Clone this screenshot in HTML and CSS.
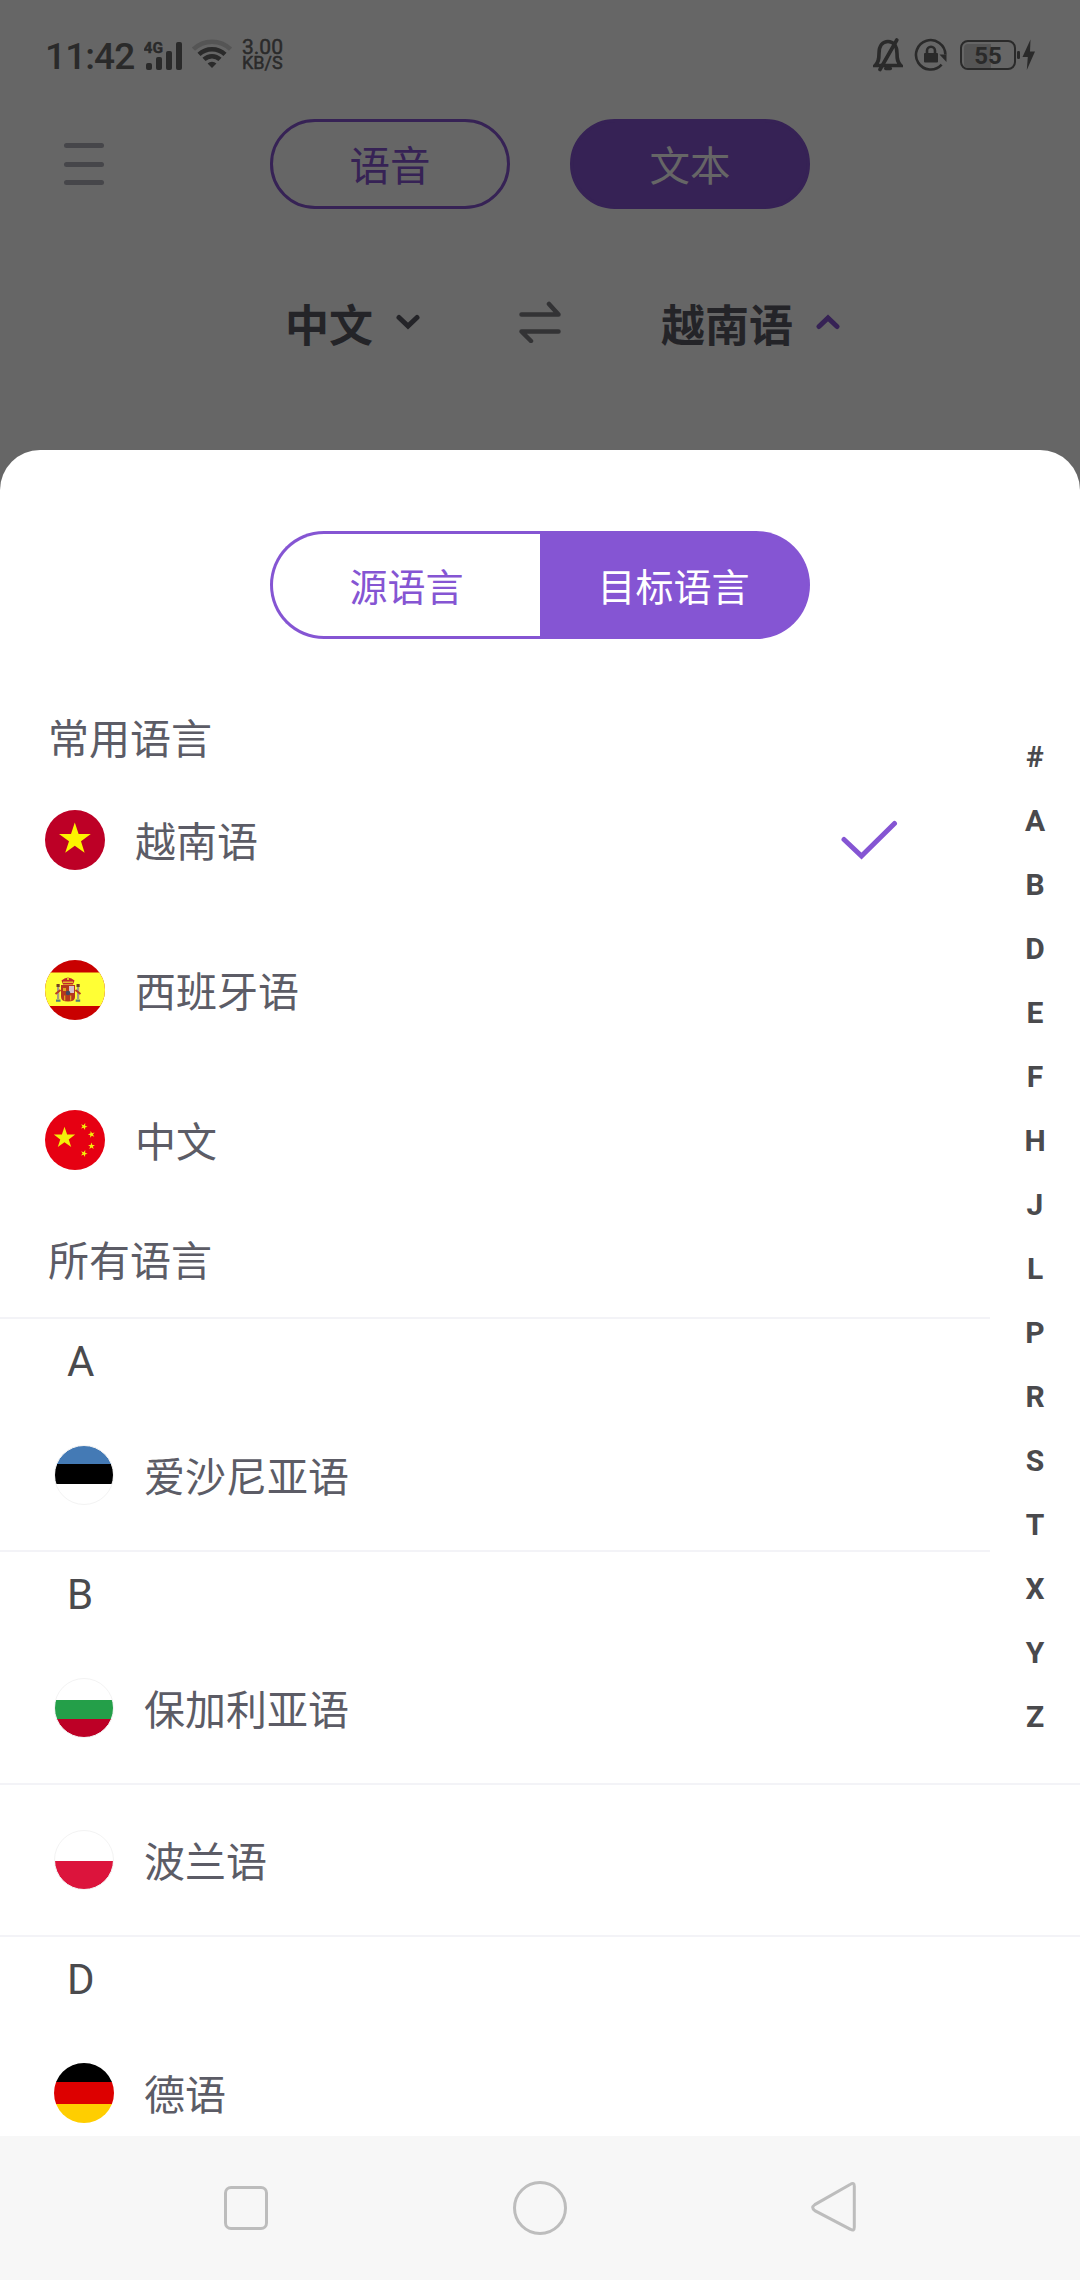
FILE: index.html
```html
<!DOCTYPE html>
<html lang="zh-CN">
<head>
<meta charset="utf-8">
<title>选择语言</title>
<link rel="stylesheet" href="styles.css">
</head>
<body>
<div class="screen">
  <div class="status-bar">
    <span class="clock">11:42</span>
    <svg class="signal" width="40" height="32" viewBox="0 0 40 32">
      <text x="-.5" y="14" class="net-type">4G</text>
      <rect x="2" y="24" width="6" height="7" rx="2"/>
      <rect x="12" y="18" width="6" height="13" rx="2"/>
      <rect x="22" y="12" width="6" height="19" rx="2"/>
      <rect x="32" y="3" width="6" height="28" rx="2"/>
    </svg>
    <svg class="wifi" width="40" height="32" viewBox="0 0 40 32">
      <path class="faint" d="M1.5 11.2a26.5 26.5 0 0 1 37 0" />
      <path d="M7 16.3a19 19 0 0 1 26 0"/>
      <path d="M12 21.4a11.6 11.6 0 0 1 16 0"/>
      <path class="dot" d="M15.6 25.4a6.4 6.4 0 0 1 8.8 0L20 30Z"/>
    </svg>
    <div class="speed"><span class="rate">3.00</span><span class="unit">KB/S</span></div>
    <svg class="bell" width="30" height="34" viewBox="0 0 30 34">
      <path d="M2.2 27.5h25.6c-3.300-3-3.800-6-3.800-12C24 7.500 20 3.500 15 3.500S6 7.500 6 15.500c0 6-.5 9-3.800 12Z"/>
      <path d="M12.800 30.500h4.500M23.800 2 7 31.500"/>
    </svg>
    <svg class="lock" width="34" height="34" viewBox="0 0 34 34">
      <path class="ring" d="M31.400 16.500a14.700 14.700 0 1 0-3.800 10.200"/>
      <path d="M25.500 16.500h7v7.500Z"/>
      <rect x="10" y="15" width="14" height="9.500" rx="1"/>
      <path class="ring" d="M13 16v-3.200a4 4 0 0 1 8 0V16"/>
    </svg>
    <div class="battery"><span class="charge"></span><span class="level">55</span></div>
    <svg class="bolt" width="20" height="32" viewBox="0 0 20 32">
      <rect x="1" y="12" width="3" height="8" rx="1.300"/>
      <path d="M14.500.5 6.500 18h5.300l-1 13L19 12.500h-5Z"/>
    </svg>
  </div>

  <div class="top-bar">
    <div class="menu"><i></i><i></i><i></i></div>
    <div class="mode">语音</div>
    <div class="mode mode-on">文本</div>
  </div>

  <div class="pair">
    <span class="lang">中文</span>
    <svg class="caret" width="24" height="16" viewBox="0 0 24 16"><path d="m3 3.500 9 8.500 9-8.500"/></svg>
    <svg class="swap" width="42" height="42" viewBox="0 0 42 42"><path d="M2.500 13.500h37L30 3M39.500 30.500h-37L12 40"/></svg>
    <span class="lang target">越南语</span>
    <svg class="caret up" width="24" height="16" viewBox="0 0 24 16"><path d="m3 12.500 9-8.500 9 8.500"/></svg>
  </div>

  <div class="sheet">
    <div class="tabs"><div class="tab">源语言</div><div class="tab tab-on">目标语言</div></div>
    <div class="list">
      <div class="title">常用语言</div>
      <div class="row common">
        <svg class="flag" viewBox="0 0 60 60"><circle cx="30" cy="30" r="30" fill="#bd0026"/><path fill="#fcf400" d="M29.800 12.500l3.800 11.500h12.200L36 31.200l3.600 11.500L29.800 35.800l-9.600 6.900L24 31.200l-10-7.200h12z"/></svg>
        <span class="name">越南语</span>
        <svg class="check" width="58" height="40" viewBox="0 0 58 40"><path d="m4 19.500 17.500 16.500L54.500 3.500"/></svg>
      </div>
      <div class="row common">
        <svg class="flag" viewBox="0 0 60 60">
          <clipPath id="round"><circle cx="30" cy="30" r="30"/></clipPath>
          <g clip-path="url(#round)">
            <path fill="#c90000" d="M0 0h60v60H0z"/><path fill="#ffff35" d="M0 12.500h60v33.500H0z"/>
            <path fill="#c2262b" d="M16.500 20.500l3-2 3.500-1 3.500 1 3 2-1.500 4h-10z"/>
            <path fill="#e8b82b" d="M18 21.500h10v1.500H18zM22 17h2v3h-2z"/>
            <path fill="#b5371d" d="M16 25h14v12q0 4.500-7 4.500T16 37z"/>
            <path fill="#d9c0c8" d="M24 26h5v7h-5z"/>
            <path fill="#e0a51c" d="M18 28h3v3h-3zM19 35.500h1.300v5H19zM25 35.500h1.300v5H25z"/>
            <circle cx="23" cy="33" r="2.300" fill="#43455f"/>
            <path fill="#a89a86" d="M12 26h2.200v13H12zM32 26h2.200v13H32z"/>
            <path fill="#713f20" d="M11.500 24h3.200v3h-3.200zM31.500 24h3.200v3h-3.200z"/>
            <path fill="none" stroke="#ba3b22" stroke-width="2" d="M10.500 34l5-4M35.500 34l-5-4"/>
            <path fill="#557b7c" d="M11 39.500h4.500v2.300H11zM30.700 39.500h4.500v2.300h-4.500z"/>
          </g>
        </svg>
        <span class="name">西班牙语</span>
      </div>
      <div class="row common">
        <svg class="flag" viewBox="0 0 60 60">
          <defs><path id="star" d="M0-10 2.350-3.100h7.200L3.800 1.250 6 8.100 0 3.900-6 8.100-3.800 1.250-9.550-3.100h7.200z"/></defs>
          <circle cx="30" cy="30" r="30" fill="#e60012"/>
          <g fill="#f3ef09">
            <use href="#star" transform="translate(19.500 28) scale(1.120)"/>
            <use href="#star" transform="translate(39 16.500) rotate(20) scale(.36)"/>
            <use href="#star" transform="translate(46.500 24.500) rotate(-14) scale(.36)"/>
            <use href="#star" transform="translate(46.500 36) scale(.36)"/>
            <use href="#star" transform="translate(39 43.500) rotate(20) scale(.36)"/>
          </g>
        </svg>
        <span class="name">中文</span>
      </div>
      <div class="title all">所有语言</div>

      <div class="letter">A</div>
      <div class="row"><span class="flag stripes estonia"></span><span class="name">爱沙尼亚语</span></div>
      <div class="letter">B</div>
      <div class="row"><span class="flag stripes bulgaria"></span><span class="name">保加利亚语</span></div>
      <div class="row ruled"><span class="flag stripes poland"></span><span class="name">波兰语</span></div>
      <div class="letter">D</div>
      <div class="row"><span class="flag stripes germany"></span><span class="name">德语</span></div>
    </div>
    <div class="index">
      <span>#</span><span>A</span><span>B</span><span>D</span><span>E</span><span>F</span><span>H</span><span>J</span><span>L</span><span>P</span><span>R</span><span>S</span><span>T</span><span>X</span><span>Y</span><span>Z</span>
    </div>
  </div>

  <div class="nav-bar">
    <svg width="60" height="60" viewBox="0 0 60 60"><rect x="9.500" y="9.500" width="41" height="41" rx="5.500"/></svg>
    <svg width="60" height="60" viewBox="0 0 60 60"><circle cx="30" cy="30" r="25.500"/></svg>
    <svg width="60" height="60" viewBox="0 0 60 60"><path d="M46.500 6.200Q50.300 3.800 50.300 8.500V49Q50.300 53.600 46.500 51.300L10.800 32.600Q6.600 29.600 10.800 26.600Z"/></svg>
  </div>
</div>
</body>
</html>
```
FILE: styles.css
```css
* { box-sizing: border-box; }

body {
  margin: 0;
  font-family: "Noto Sans CJK SC", Roboto, sans-serif;
}

svg { display: block; flex: none; }

.screen {
  width: 1080px;
  height: 2280px;
  display: flex;
  flex-direction: column;
  background: #666;
  overflow: hidden;
}

/* status bar */
.status-bar {
  height: 112px;
  flex: none;
  display: flex;
  align-items: center;
  padding: 0 44px 0 45px;
  font-family: Roboto, sans-serif;
  color: #2a2a2a;
  fill: #2a2a2a;
}

.clock {
  width: 99px;
  padding-top: 1px;
  font-size: 37px;
  line-height: 44px;
  font-weight: 500;
  letter-spacing: -.9px;
}

.net-type {
  font-size: 15.500px;
  font-weight: 700;
  stroke: #2a2a2a;
  stroke-width: .4px;
}

.signal { margin-top: -2px; }

.wifi {
  margin: -4px 0 0 8px;
  fill: none;
  stroke: #2a2a2a;
  stroke-width: 4.500;
}

.wifi .faint { stroke: #555; }
.wifi .dot { fill: #2a2a2a; stroke: none; }

.speed {
  display: flex;
  flex-direction: column;
  margin: -3px auto 0 10px;
  font-weight: 400;
  -webkit-text-stroke: .5px #2a2a2a;
}

.rate { font-size: 21px; line-height: 16px; }
.unit { font-size: 18px; line-height: 16px; }

.bell {
  margin-top: -3px;
  fill: none;
  stroke: #2a2a2a;
  stroke-width: 3.600;
  stroke-linecap: round;
}

.lock { margin: -2px 0 0 11px; }

.ring {
  fill: none;
  stroke: #2a2a2a;
  stroke-width: 2.600;
}

.battery {
  width: 56px;
  height: 30px;
  margin: -2px 0 0 12px;
  padding: 2px;
  display: grid;
  border: 2px solid #2a2a2a;
  border-radius: 8px;
}

.charge, .level { grid-area: 1 / 1; }

.charge {
  width: 27px;
  background: #555;
  border-radius: 4px 0 0 4px;
}

.level {
  font-size: 24px;
  line-height: 24px;
  font-weight: 700;
  text-align: center;
}

.bolt { margin-top: -2px; }

/* translation header */
.top-bar {
  height: 90px;
  flex: none;
  margin-top: 7px;
  display: flex;
  align-items: center;
}

.menu {
  width: 40px;
  height: 42px;
  margin: 0 166px 0 64px;
  display: flex;
  flex-direction: column;
  justify-content: space-between;
}

.menu i {
  height: 5px;
  border-radius: 3px;
  background: #46464a;
}

.mode {
  width: 240px;
  height: 90px;
  margin-right: 60px;
  border: 3px solid #362255;
  border-radius: 45px;
  font-size: 40.500px;
  line-height: 83px;
  text-align: center;
  color: #362255;
}

.mode-on {
  background: #362255;
  color: #666;
}

.pair {
  height: 241px;
  flex: none;
  display: flex;
  align-items: center;
  padding: 0 0 17px 285px;
}

.lang {
  padding-top: 3px;
  font-size: 44px;
  line-height: 60px;
  font-weight: 700;
  color: #242428;
}

.caret {
  margin: 2px 0 0 23px;
  fill: none;
  stroke: #242428;
  stroke-width: 5;
  stroke-linecap: round;
}

.caret.up { stroke: #362255; }

.swap {
  margin: 1px 0 0 99px;
  fill: none;
  stroke: #333335;
  stroke-width: 4.500;
  stroke-linecap: round;
  stroke-linejoin: round;
}

.target { margin-left: 100px; }

/* language sheet */
.sheet {
  position: relative;
  flex: 1;
  min-height: 0;
  display: flex;
  flex-direction: column;
  background: #fff;
  border-radius: 40px 40px 0 0;
  overflow: hidden;
}

.tabs {
  width: 540px;
  height: 108px;
  flex: none;
  margin: 81px auto 67px;
  display: flex;
  font-size: 38px;
  line-height: 101px;
  text-align: center;
}

.tab {
  width: 50%;
  border: 3px solid #8555d3;
  border-right: 0;
  border-radius: 54px 0 0 54px;
  color: #8555d3;
}

.tab-on {
  border-left: 0;
  border-right: 3px solid #8555d3;
  border-radius: 0 54px 54px 0;
  background: #8555d3;
  color: #fff;
}

.list {
  font-size: 41px;
  color: #5c5c66;
}

.title {
  height: 59px;
  padding-left: 48px;
  line-height: 60px;
}

.title.all { margin: 13px 0 30px; }

.row {
  height: 150px;
  padding: 45px 0 45px 54px;
  display: flex;
  align-items: center;
}

.row.common { padding-left: 45px; }

.row.ruled {
  height: 152px;
  border-top: 2px solid #f3f3f7;
}

.name {
  margin-left: 30px;
  padding-bottom: 2px;
  line-height: 60px;
}

.flag {
  width: 60px;
  height: 60px;
  flex: none;
}

.stripes {
  border: 1px solid #f3f3f3;
  border-radius: 50%;
  background-origin: border-box;
}

.estonia { background-image: linear-gradient(#447ab5 19px, #000 19px 39px, #fff 39px); }
.bulgaria { background-image: linear-gradient(#fff 22px, #249f49 22px 41px, #bd0026 41px); }
.poland { background-image: linear-gradient(#fff 31px, #dc143c 31px); }
.germany { border: 0; background-image: linear-gradient(#000 19px, #d00 19px 41px, #ffce00 41px); }

.check {
  margin: 0 182px 0 auto;
  fill: none;
  stroke: #8555d3;
  stroke-width: 5;
  stroke-linecap: round;
}

.letter {
  height: 83px;
  padding: 18px 0 0 67px;
  border-top: 2px solid #f3f3f7;
  font-family: Roboto, sans-serif;
  font-size: 42px;
  line-height: 50px;
  color: #4a4a4d;
}

/* quick index floating over the right edge of the list */
.index {
  position: absolute;
  top: 275px;
  right: 0;
  width: 90px;
  display: flex;
  flex-direction: column;
  background: #fff;
  font-family: Roboto, sans-serif;
  font-size: 30px;
  line-height: 64px;
  font-weight: 700;
  text-align: center;
  color: #4a4a4d;
}

/* system navigation */
.nav-bar {
  height: 144px;
  flex: none;
  display: flex;
  align-items: center;
  gap: 234px;
  padding-left: 216px;
  background: #f7f7f7;
  fill: none;
  stroke: #bdbdbd;
  stroke-width: 3;
}
```
